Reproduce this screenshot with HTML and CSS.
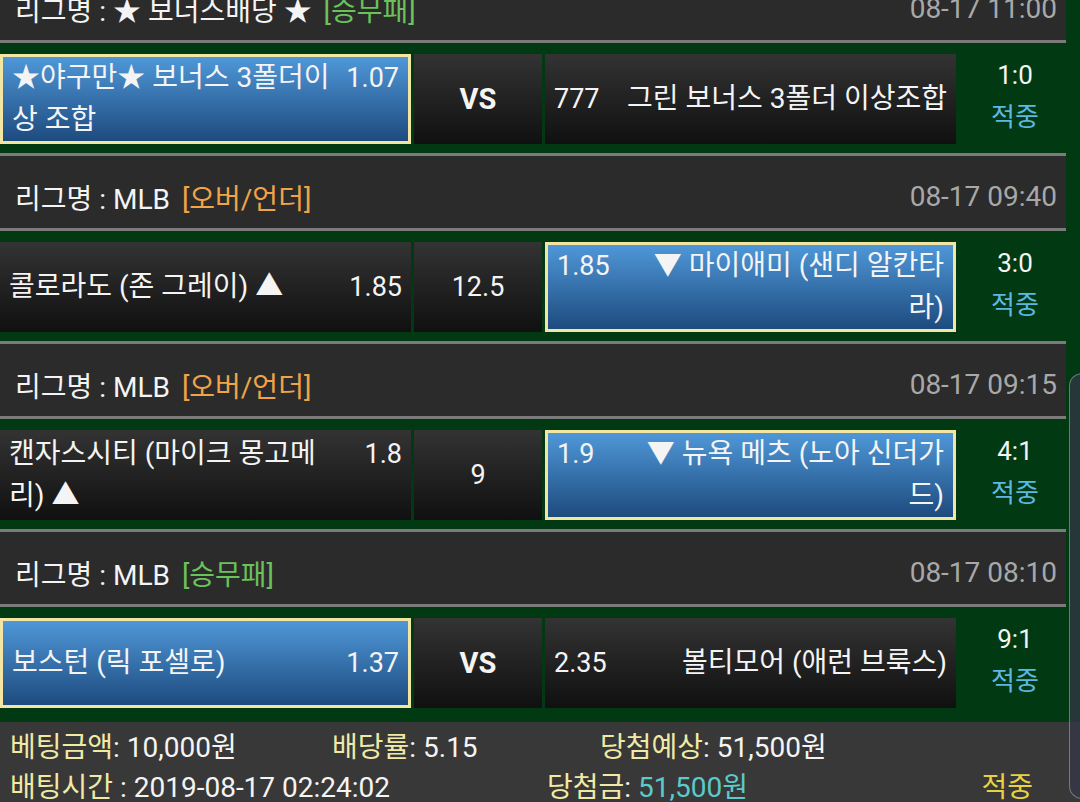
FILE: index.html
```html
<!DOCTYPE html>
<html lang="ko">
  <head>
    <meta charset="UTF-8" />
    <meta name="viewport" content="width=device-width, initial-scale=1.0" />
    <title>베팅내역</title>
    <link rel="stylesheet" href="styles.css">
  </head>
  <body>
    <div class="bet-list">
      <div class="league">
        <span class="league-name">리그명 : ★ 보너스배당 ★ <span class="bet-type win-draw">[승무패]</span></span>
        <span class="league-time">08-17 11:00</span>
      </div>
      <div class="match">
        <div class="team home picked">
          <div class="team-line">
            <span class="team-name">★야구만★ 보너스 3폴더이상 조합</span>
            <span class="odds">1.07</span>
          </div>
        </div>
        <div class="mid vs">VS</div>
        <div class="team away">
          <div class="team-line">
            <span class="odds">777</span>
            <span class="team-name">그린 보너스 3폴더 이상조합</span>
          </div>
        </div>
        <div class="result">
          <div class="score">1:0</div>
          <div class="hit">적중</div>
        </div>
      </div>

      <div class="league">
        <span class="league-name">리그명 : MLB <span class="bet-type over-under">[오버/언더]</span></span>
        <span class="league-time">08-17 09:40</span>
      </div>
      <div class="match">
        <div class="team home">
          <div class="team-line">
            <span class="team-name">콜로라도 (존 그레이) ▲</span>
            <span class="odds">1.85</span>
          </div>
        </div>
        <div class="mid">12.5</div>
        <div class="team away picked">
          <div class="team-line">
            <span class="odds">1.85</span>
            <span class="team-name">▼ 마이애미 (샌디 알칸타라)</span>
          </div>
        </div>
        <div class="result">
          <div class="score">3:0</div>
          <div class="hit">적중</div>
        </div>
      </div>

      <div class="league">
        <span class="league-name">리그명 : MLB <span class="bet-type over-under">[오버/언더]</span></span>
        <span class="league-time">08-17 09:15</span>
      </div>
      <div class="match">
        <div class="team home">
          <div class="team-line">
            <span class="team-name">캔자스시티 (마이크 몽고메리) ▲</span>
            <span class="odds">1.8</span>
          </div>
        </div>
        <div class="mid">9</div>
        <div class="team away picked">
          <div class="team-line">
            <span class="odds">1.9</span>
            <span class="team-name">▼ 뉴욕 메츠 (노아 신더가드)</span>
          </div>
        </div>
        <div class="result">
          <div class="score">4:1</div>
          <div class="hit">적중</div>
        </div>
      </div>

      <div class="league">
        <span class="league-name">리그명 : MLB <span class="bet-type win-draw">[승무패]</span></span>
        <span class="league-time">08-17 08:10</span>
      </div>
      <div class="match">
        <div class="team home picked">
          <div class="team-line">
            <span class="team-name">보스턴 (릭 포셀로)</span>
            <span class="odds">1.37</span>
          </div>
        </div>
        <div class="mid vs">VS</div>
        <div class="team away">
          <div class="team-line">
            <span class="odds">2.35</span>
            <span class="team-name">볼티모어 (애런 브룩스)</span>
          </div>
        </div>
        <div class="result">
          <div class="score">9:1</div>
          <div class="hit">적중</div>
        </div>
      </div>
    </div>

    <div class="summary">
      <div class="summary-row">
        <span class="amount"><span class="label">베팅금액</span>: 10,000원</span>
        <span class="rate"><span class="label">배당률</span>: 5.15</span>
        <span class="expect"><span class="label">당첨예상</span>: 51,500원</span>
      </div>
      <div class="summary-row">
        <span class="bet-time"><span class="label">배팅시간</span> : 2019-08-17 02:24:02</span>
        <span class="win"><span class="label">당첨금</span>: <span class="win-amount">51,500원</span></span>
        <span class="status">적중</span>
      </div>
    </div>

    <div class="edge-handle"></div>
  </body>
</html>
```

FILE: styles.css
```css
* {
  box-sizing: border-box;
}
html,
body {
  margin: 0;
}
body {
  position: relative;
  width: 1080px;
  height: 802px;
  overflow: hidden;
  background-color: #013a12;
  font-family: Roboto, "Noto Sans CJK KR", sans-serif;
  color: #f4f4f4;
}
.bet-list {
  width: 1066px;
  margin-top: -35px;
}
.league {
  display: flex;
  justify-content: space-between;
  align-items: center;
  height: 78px;
  padding: 9px 9px 0 15px;
  background-color: #2b2b2b;
  border-top: 3px solid #7b7b7b;
  border-bottom: 3px solid #7b7b7b;
  font-size: 28px;
}
.bet-type {
  margin-left: 5px;
}
.bet-type.win-draw {
  color: #6cc25a;
}
.bet-type.over-under {
  color: #f0a447;
}
.league-time {
  font-size: 28px;
  color: #a8a8a8;
}
.match {
  display: flex;
  gap: 3px;
  padding: 11px 0 9px;
}
.match:last-child {
  padding-bottom: 14px;
}
.team,
.mid {
  height: 90px;
  background: linear-gradient(#333333, #101010);
}
.team {
  display: flex;
  align-items: center;
  width: 411px;
  padding: 0 9px;
  font-size: 28px;
  line-height: 42px;
}
.team.picked {
  background: linear-gradient(#4f97d8, #1d4b7e);
  border: 3px solid #f2e6a2;
}
.team-line {
  display: flex;
  align-items: baseline;
  width: 100%;
}
.team-name {
  flex: 0 0 321px;
}
.odds {
  flex: 1;
  font-size: 27px;
}
.home .odds {
  text-align: right;
}
.away .team-name {
  text-align: right;
}
.mid {
  display: flex;
  align-items: center;
  justify-content: center;
  width: 128px;
  font-size: 27px;
}
.mid.vs {
  font-weight: bold;
  font-size: 29px;
}
.result {
  flex: 1;
  display: flex;
  flex-direction: column;
  justify-content: center;
  padding: 0 0 6px 5px;
  text-align: center;
  font-size: 26px;
  line-height: 42px;
}
.hit {
  color: #5cb8e0;
}
.summary {
  padding: 6px 0 0 10px;
  background-color: #383838;
  font-size: 28px;
  line-height: 40px;
}
.summary-row {
  display: flex;
  white-space: nowrap;
}
.label {
  color: #f1eaa6;
}
.amount {
  width: 322px;
}
.rate {
  width: 268px;
}
.bet-time {
  width: 537px;
}
.win {
  flex: 1;
}
.win-amount {
  color: #5ccaca;
}
.status {
  margin-right: 47px;
  color: #e8d243;
}
.edge-handle {
  position: absolute;
  left: 1069px;
  top: 373px;
  width: 26px;
  height: 426px;
  border: 1px solid rgba(200, 200, 200, 0.45);
  border-radius: 14px;
  background-color: rgba(53, 55, 74, 0.71);
}
```
